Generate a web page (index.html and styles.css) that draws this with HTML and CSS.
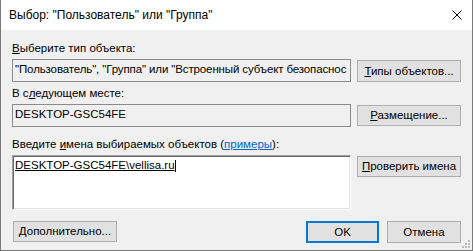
FILE: index.html
```html
<!doctype html>
<html lang="ru">
  <head>
    <meta charset="UTF-8" />
    <title>Выбор: "Пользователь" или "Группа"</title>
    <link rel="stylesheet" href="styles.css">
  </head>
  <body>
    <div class="dialog">
      <div class="titlebar">
        <span class="title">Выбор: "Пользователь" или "Группа"</span>
        <svg class="close" width="10" height="10" viewBox="0 0 10 10">
          <path d="M0.5 0.5 L9.5 9.5 M9.5 0.5 L0.5 9.5" stroke="#000" stroke-width="1" fill="none" />
        </svg>
      </div>

      <div class="content">
        <div class="section">
          <div class="label"><u>В</u>ыберите тип объекта:</div>
          <div class="row">
            <div class="field tight">"Пользователь", "Группа" или "Встроенный субъект безопаснос</div>
            <button class="btn first"><u>Т</u>ипы объектов...</button>
          </div>
        </div>

        <div class="section second">
          <div class="label">В с<u>л</u>едующем месте:</div>
          <div class="row">
            <div class="field">DESKTOP-GSC54FE</div>
            <button class="btn"><u>Р</u>азмещение...</button>
          </div>
        </div>

        <div class="section third">
          <div class="label">Введите <u>и</u>мена выбираемых объектов (<a href="#" class="link">примеры</a>):</div>
          <div class="row">
            <div class="names"><span class="resolved">DESKTOP-GSC54FE\vellisa.ru</span><span class="caret"></span></div>
            <button class="btn"><u>П</u>роверить имена</button>
          </div>
        </div>

        <div class="footer">
          <button class="btn advanced"><u>Д</u>ополнительно...</button>
          <div class="spacer"></div>
          <button class="btn ok">OK</button>
          <button class="btn cancel">Отмена</button>
        </div>
      </div>

      <svg class="grip" width="8" height="8" viewBox="0 0 8 8">
        <rect x="6" y="0" width="2" height="2" fill="#bcbcbc" />
        <rect x="3" y="3" width="2" height="2" fill="#bcbcbc" />
        <rect x="6" y="3" width="2" height="2" fill="#bcbcbc" />
        <rect x="0" y="6" width="2" height="2" fill="#bcbcbc" />
        <rect x="3" y="6" width="2" height="2" fill="#bcbcbc" />
        <rect x="6" y="6" width="2" height="2" fill="#bcbcbc" />
      </svg>
    </div>
  </body>
</html>
```

FILE: styles.css
```css
body {
  margin: 0;
  font-family: "Liberation Sans", Arial, sans-serif;
  font-size: 11.5px;
  color: #000;
  background: #f0f0f0;
}
.dialog {
  position: relative;
  width: 473px;
  height: 251px;
  box-sizing: border-box;
  border: 1px solid #7a7a7a;
  border-top: none;
  background: #f0f0f0;
}
.titlebar {
  height: 30px;
  background: #fff;
  display: flex;
  align-items: center;
  justify-content: space-between;
  padding: 0 10px 0 8px;
}
.title {
  font-size: 12px;
  line-height: 15px;
}
.close {
  display: block;
}
.content {
  padding: 11px 11px 0 11px;
}
.label {
  line-height: 15px;
  margin-bottom: 3px;
  white-space: nowrap;
}
.section.second {
  margin-top: 4px;
}
.section.third {
  margin-top: 10px;
}
.row {
  display: flex;
  align-items: flex-start;
  gap: 6px;
}
.field {
  width: 339px;
  flex-shrink: 0;
  height: 23px;
  box-sizing: border-box;
  border: 1px solid #8a8a8a;
  background: #f0f0f0;
  padding: 0 2px;
  line-height: 19px;
  white-space: nowrap;
  overflow: hidden;
}
.field.tight {
  letter-spacing: -0.12px;
}
.names {
  width: 339px;
  flex-shrink: 0;
  height: 55px;
  box-sizing: border-box;
  background: #fff;
  border: 1px solid;
  border-color: #a0a0a0 #fff #fff #a0a0a0;
  box-shadow: inset 1px 1px #696969, inset -1px -1px #e3e3e3;
  padding: 2px 0 0 2px;
  line-height: 15px;
  white-space: nowrap;
}
.resolved {
  text-decoration: underline;
}
.caret {
  display: inline-block;
  width: 1px;
  height: 12px;
  background: #000;
  vertical-align: -3px;
}
.btn {
  font: inherit;
  color: #000;
  width: 104px;
  height: 21px;
  margin-top: 1px;
  padding: 0;
  box-sizing: border-box;
  background: #e1e1e1;
  border: 1px solid #adadad;
  line-height: 17px;
  white-space: nowrap;
}
.btn.first {
  height: 22px;
}
.link {
  color: #0066cc;
  text-decoration: underline;
}
.footer {
  display: flex;
  margin-top: 10px;
}
.spacer {
  flex: 1;
}
.btn.advanced {
  margin-left: 1px;
}
.btn.ok {
  width: 73px;
  height: 22px;
  border: 2px solid #0078d7;
}
.btn.cancel {
  width: 74px;
  height: 22px;
  margin-left: 8px;
}
.grip {
  position: absolute;
  right: 2px;
  bottom: 2px;
}
```
